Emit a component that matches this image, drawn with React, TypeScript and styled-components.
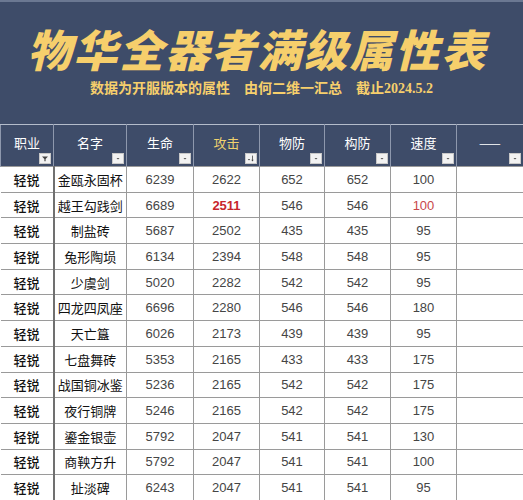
import { createGlobalStyle } from "styled-components";
import styled from "styled-components";

const GlobalStyle = createGlobalStyle`
  html, body {
    margin: 0;
    padding: 0;
    background: #ffffff;
  }
  body {
    font-family: "Liberation Sans", "Noto Sans CJK SC", sans-serif;
  }
`;

const Page = styled.div`
  width: 523px;
  overflow: hidden;
`;

const Banner = styled.div`
  height: 124px;
  background: #3e4c69;
  border-top: 2px solid #6b7892;
  box-sizing: border-box;
  display: flex;
  flex-direction: column;
  align-items: center;
  padding-top: 21px;
`;

const Title = styled.h1`
  margin: 0;
  font-family: "Noto Sans CJK SC", sans-serif;
  font-weight: 900;
  font-size: 44px;
  line-height: 50px;
  letter-spacing: 2px;
  color: #f6cf6c;
  transform: skewX(-14deg);
  white-space: nowrap;
`;

const Subtitle = styled.div`
  margin-top: 7px;
  font-family: "Liberation Serif", "Noto Sans CJK SC", serif;
  font-weight: 700;
  font-size: 14px;
  line-height: 18px;
  color: #f6cf6c;
  display: flex;
  gap: 14px;
  white-space: nowrap;
`;

const Table = styled.table`
  width: 523px;
  border-collapse: collapse;
  table-layout: fixed;
`;

const HeadCell = styled.th<{ $accent?: boolean }>`
  position: relative;
  height: 42px;
  padding: 0 0 6px;
  box-sizing: border-box;
  background: #3e4c69;
  border-top: 1px solid #b4bccb;
  border-left: 1px solid #8e98ad;
  border-right: 1px solid #8e98ad;
  font-family: "Noto Sans CJK SC", sans-serif;
  font-weight: 400;
  font-size: 13px;
  color: ${(p) => (p.$accent ? "#f0d26e" : "#ffffff")};
  text-align: center;
  vertical-align: middle;
`;

const FilterBox = styled.span`
  position: absolute;
  right: 2px;
  bottom: 2px;
  width: 10px;
  height: 9px;
  background: #f2f2f2;
  border: 1px solid #c8c8c8;
  display: flex;
  align-items: center;
  justify-content: center;
`;

const Row = styled.tr`
  height: 25.7px;
`;

const Cell = styled.td<{ $kind?: "role" | "name" | "num"; $red?: boolean; $bold?: boolean }>`
  padding: 0;
  border: 1px solid #9a9a9a;
  text-align: center;
  vertical-align: middle;
  font-size: 13px;
  font-family: ${(p) =>
    p.$kind === "num"
      ? `"Liberation Sans", "Noto Sans CJK SC", sans-serif`
      : `"Noto Sans CJK SC", sans-serif`};
  font-weight: ${(p) => (p.$bold ? 700 : p.$kind === "role" ? 500 : 400)};
  color: ${(p) =>
    p.$red ? (p.$bold ? "#c8262c" : "#c8474a") : p.$kind === "num" ? "#454545" : "#111111"};
  &:first-child {
    border-left: none;
    border-right: 2px solid #707070;
  }
`;

type Icon = "filter" | "sort" | "drop";

const FilterIcon = ({ kind }: { kind: Icon }) => (
  <FilterBox>
    <svg width="8" height="7" viewBox="0 0 8 7">
      {kind === "drop" && <path d="M2.5 3 L5.5 3 L4 4.6 Z" fill="#555" />}
      {kind === "filter" && (
        <path d="M1 1.5 L7 1.5 L4.6 4 L4.6 6.2 L3.4 6.2 L3.4 4 Z" fill="#444" />
      )}
      {kind === "sort" && (
        <g fill="#444" stroke="#444" strokeWidth="0.8">
          <path d="M0.8 4 L3.2 4 L2 5.4 Z" stroke="none" />
          <line x1="5.5" y1="0.6" x2="5.5" y2="6" />
          <path d="M4.3 4.8 L6.7 4.8 L5.5 6.4 Z" stroke="none" />
        </g>
      )}
    </svg>
  </FilterBox>
);

const columns: { label: string; width: number; icon: Icon; accent?: boolean }[] = [
  { label: "职业", width: 53, icon: "filter" },
  { label: "名字", width: 73, icon: "drop" },
  { label: "生命", width: 67, icon: "drop" },
  { label: "攻击", width: 66, icon: "sort", accent: true },
  { label: "物防", width: 65, icon: "drop" },
  { label: "构防", width: 66, icon: "drop" },
  { label: "速度", width: 66, icon: "drop" },
  { label: "——", width: 67, icon: "drop" },
];

const rows: [string, number, number, number, number, number][] = [
  ["金瓯永固杯", 6239, 2622, 652, 652, 100],
  ["越王勾践剑", 6689, 2511, 546, 546, 100],
  ["制盐砖", 5687, 2502, 435, 435, 95],
  ["兔形陶埙", 6134, 2394, 548, 548, 95],
  ["少虞剑", 5020, 2282, 542, 542, 95],
  ["四龙四凤座", 6696, 2280, 546, 546, 180],
  ["天亡簋", 6026, 2173, 439, 439, 95],
  ["七盘舞砖", 5353, 2165, 433, 433, 175],
  ["战国铜冰鉴", 5236, 2165, 542, 542, 175],
  ["夜行铜牌", 5246, 2165, 542, 542, 175],
  ["鎏金银壶", 5792, 2047, 541, 541, 130],
  ["商鞅方升", 5792, 2047, 541, 541, 100],
  ["扯淡碑", 6243, 2047, 541, 541, 95],
];

const App = () => {
  return (
    <Page>
      <GlobalStyle />
      <Banner>
        <Title>物华全器者满级属性表</Title>
        <Subtitle>
          <span>数据为开服版本的属性</span>
          <span>由何二维一汇总</span>
          <span>截止2024.5.2</span>
        </Subtitle>
      </Banner>
      <Table>
        <colgroup>
          {columns.map((c) => (
            <col key={c.label} style={{ width: c.width }} />
          ))}
        </colgroup>
        <thead>
          <tr>
            {columns.map((c) => (
              <HeadCell key={c.label} $accent={c.accent}>
                {c.label}
                <FilterIcon kind={c.icon} />
              </HeadCell>
            ))}
          </tr>
        </thead>
        <tbody>
          {rows.map(([name, hp, atk, pdef, mdef, spd], i) => (
            <Row key={name}>
              <Cell $kind="role">轻锐</Cell>
              <Cell $kind="name">{name}</Cell>
              <Cell $kind="num">{hp}</Cell>
              <Cell $kind="num" $red={i === 1} $bold={i === 1}>
                {atk}
              </Cell>
              <Cell $kind="num">{pdef}</Cell>
              <Cell $kind="num">{mdef}</Cell>
              <Cell $kind="num" $red={i === 1}>
                {spd}
              </Cell>
              <Cell />
            </Row>
          ))}
        </tbody>
      </Table>
    </Page>
  );
};

export default App;
